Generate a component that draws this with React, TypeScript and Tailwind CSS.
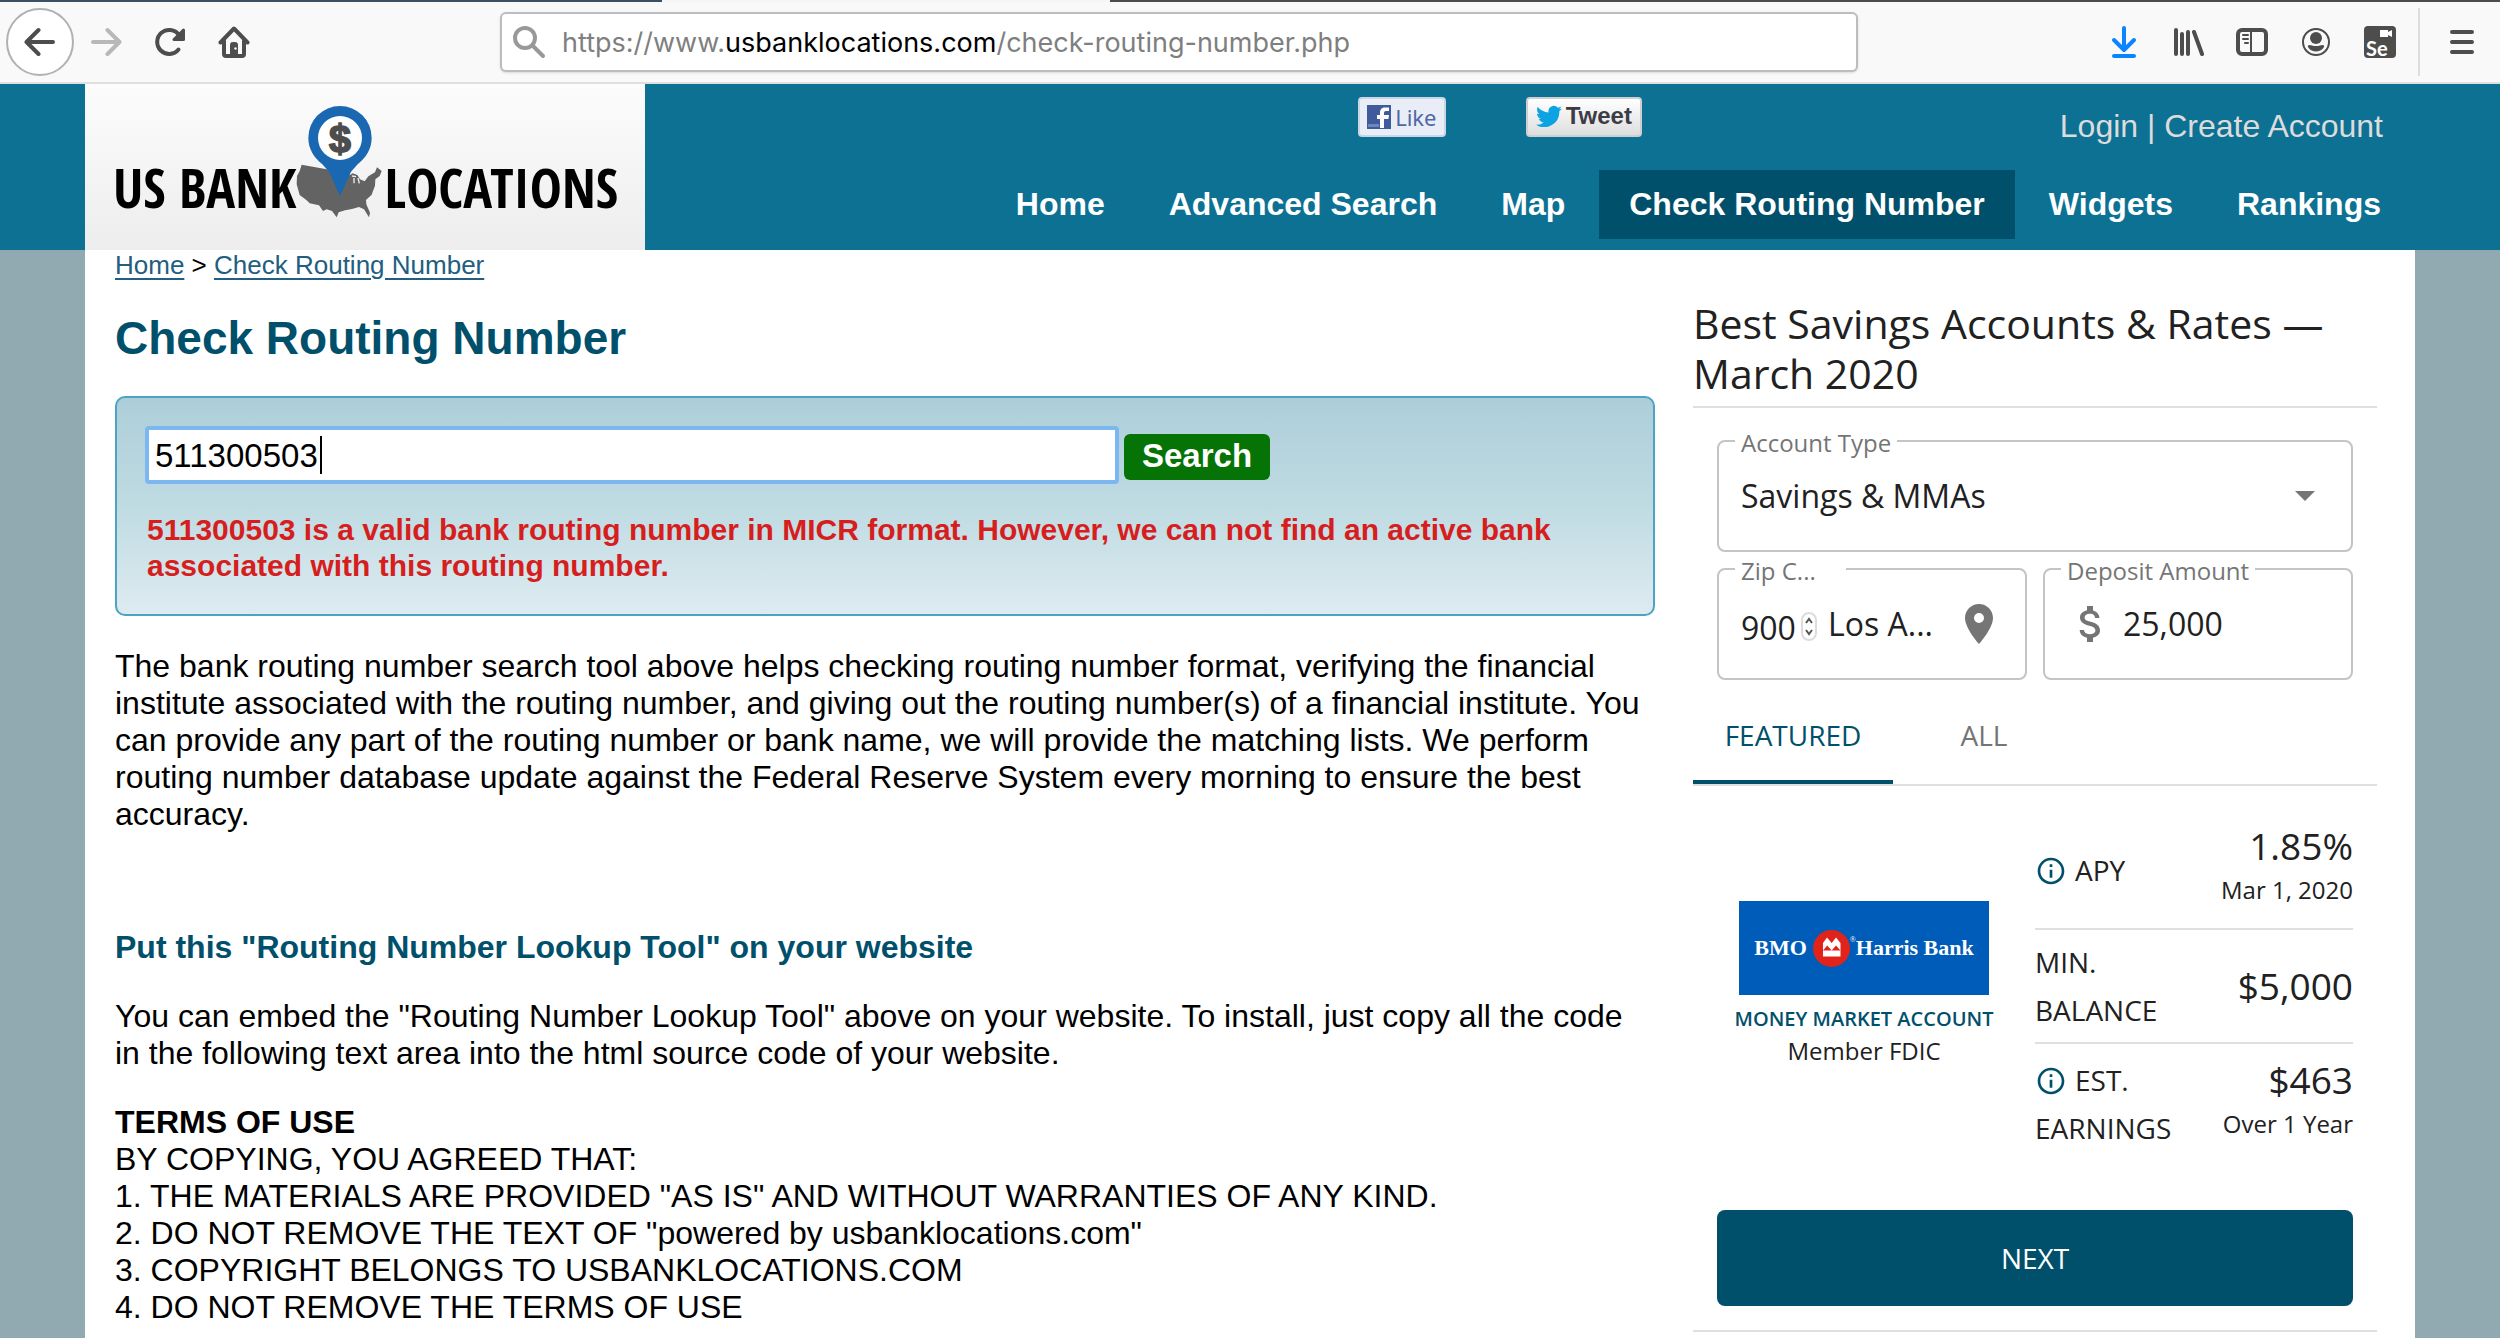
import React from "react";
import { MdAttachMoney, MdInfoOutline, MdLocationOn } from "react-icons/md";

function ToolbarButton({ label, className = "", children }: { label: string; className?: string; children: React.ReactNode }) {
  return (
    <button type="button" aria-label={label} className={`flex shrink-0 items-center justify-center ${className}`}>
      {children}
    </button>
  );
}

function BrowserBar() {
  return (
    <div className="bg-[#f9f9fa]">
      <div className="flex h-0.5">
        <div className="w-[662px] bg-[#3d5062]" />
        <div className="w-[448px] bg-[#f5f6f7]" />
        <div className="flex-1 bg-[#4c4c4c]" />
      </div>
      <div className="flex h-[82px] items-center border-b-2 border-[#dfdfdf]">
        <ToolbarButton label="Back" className="ml-1.5 size-[68px] rounded-full border-2 border-[#b1b1b1] bg-white">
          <svg width="32" height="32" viewBox="0 0 32 32" fill="none" stroke="#4d4d4e" strokeWidth="4" strokeLinecap="round" strokeLinejoin="round">
            <path d="M29 16H3M14.500 4L2.500 16l12 12" />
          </svg>
        </ToolbarButton>
        <ToolbarButton label="Forward" className="ml-4 size-8">
          <svg width="32" height="32" viewBox="0 0 32 32" fill="none" stroke="#b8b8b9" strokeWidth="4" strokeLinecap="round" strokeLinejoin="round">
            <path d="M3 16h26M17.500 4l12 12-12 12" />
          </svg>
        </ToolbarButton>
        <ToolbarButton label="Reload" className="ml-8 size-8">
          <svg width="32" height="32" viewBox="0 0 32 32" fill="none" stroke="#4d4d4e" strokeWidth="4" strokeLinecap="round" strokeLinejoin="round">
            <path d="M24.500 23.500A12 12 0 1 1 25 9" />
            <path d="M29.500 4v9.500H20z" fill="#4d4d4e" strokeWidth="3" />
          </svg>
        </ToolbarButton>
        <ToolbarButton label="Home" className="ml-8 size-8">
          <svg width="32" height="32" viewBox="0 0 32 32" fill="none" stroke="#4d4d4e" strokeWidth="4" strokeLinecap="round" strokeLinejoin="round">
            <path d="M2.500 16.500L16 2.500l13.500 14" />
            <path d="M6 15v13a2 2 0 0 0 2 2h16a2 2 0 0 0 2-2V15" />
            <path d="M12.500 29V18.500a2 2 0 0 1 2-2h3a2 2 0 0 1 2 2V29z" fill="#4d4d4e" strokeWidth="1" />
            <circle cx="17.500" cy="22.500" r="1.200" fill="#f9f9fa" stroke="none" />
          </svg>
        </ToolbarButton>
        <label className="mr-[250px] ml-[250px] flex h-[60px] flex-1 items-center rounded-md border-2 border-[#bdbdbe] bg-white px-2.5 shadow-sm">
          <svg className="mr-4 shrink-0" width="34" height="34" viewBox="0 0 34 34" fill="none" stroke="#999" strokeWidth="4" strokeLinecap="round">
            <circle cx="13" cy="13" r="10" />
            <path d="M20.500 20.500L31 31" />
          </svg>
          <span className="relative flex-1 pt-0.5 font-[Inter,sans-serif] text-[27px] leading-9 text-[#7f7f80]">
            https://www.<span className="text-black">usbanklocations.com</span>/check-routing-number.php
            <input aria-label="Address" readOnly className="absolute inset-0 w-full bg-transparent" />
          </span>
        </label>
        <ToolbarButton label="Downloads" className="size-8">
          <svg width="32" height="32" viewBox="0 0 32 32" fill="none" stroke="#0a84ff" strokeWidth="4" strokeLinecap="round" strokeLinejoin="round">
            <path d="M16 2v22M6 14l10 10 10-10M6 30h20" />
          </svg>
        </ToolbarButton>
        <ToolbarButton label="Library" className="ml-8 size-8">
          <svg width="32" height="32" viewBox="0 0 32 32" fill="none" stroke="#4d4d4e" strokeWidth="4" strokeLinecap="round">
            <path d="M4 4v24M10 8v20M16 6v22M22 6l8 22" />
          </svg>
        </ToolbarButton>
        <ToolbarButton label="Sidebars" className="ml-8 size-8">
          <svg width="32" height="32" viewBox="0 0 32 32" fill="none" stroke="#4d4d4e" strokeLinecap="round">
            <rect x="2" y="4" width="28" height="24" rx="4" strokeWidth="4" />
            <path d="M15 5v22" strokeWidth="2" />
            <path d="M7 9h5M7 13h5M9 17h3" strokeWidth="2" />
          </svg>
        </ToolbarButton>
        <ToolbarButton label="Account" className="ml-8 size-8">
          <svg width="32" height="32" viewBox="0 0 32 32" fill="#4d4d4e">
            <circle cx="16" cy="16" r="13" fill="none" stroke="#4d4d4e" strokeWidth="2" />
            <circle cx="16" cy="12" r="6" />
            <path d="M8 19.500c2-1.500 3.500.5 8 .5s6-2 8-.5c1 1.500-2.500 6-8 6s-9-4.500-8-6z" />
          </svg>
        </ToolbarButton>
        <ToolbarButton label="Selenium IDE" className="ml-8 size-8 rounded-sm bg-[#4d4d4e]">
          <span className="relative flex size-8 items-end pl-0.5 font-[Lato,sans-serif] text-xl leading-5 font-bold text-white">
            Se
            <svg className="absolute top-1 right-1" width="12" height="7" viewBox="0 0 12 7" fill="#fff">
              <path d="M0 0h8v2l4-2v7L8 5v2H0z" />
            </svg>
          </span>
        </ToolbarButton>
        <div className="ml-[22px] h-[68px] w-0.5 bg-[#dddddf]" />
        <ToolbarButton label="Menu" className="mr-[22px] ml-[26px] size-8">
          <svg width="32" height="32" viewBox="0 0 32 32" fill="none" stroke="#4d4d4e" strokeWidth="4" strokeLinecap="round">
            <path d="M6 6h20M6 16h20M6 26h20" />
          </svg>
        </ToolbarButton>
      </div>
    </div>
  );
}

function Logo() {
  return (
    <a
      href="#home"
      className="flex h-[166px] w-[560px] shrink-0 items-end bg-linear-to-b from-[#fcfcfc] to-[#ededed] px-7 pb-8 font-['Liberation_Sans_Narrow','Open_Sans_Condensed','Roboto_Condensed',sans-serif] text-[54px] leading-[54px] font-bold whitespace-nowrap text-black"
    >
      <span className="pb-1">US BANK</span>
      <svg className="shrink-0" width="88" height="112" viewBox="48 30 264 336">
        <path
          fill="#636363"
          d="M65 206l75 14 70 17 8-5 14 5 8 13 14 6 11-15 20-12 6-15 14 11-6 15-13 10-1 19-6 16-4 11-17 16 1 13 11 25-3 14-15-24-15-7-21 6-21 4-19 6-6 15-14-19-16-5-11 5-12-17-28-6-10-10-20-15-9-32 1-25 8-15z"
        />
        <path fill="none" stroke="#efefef" strokeWidth="4" d="M216 240l12 2M222 246v16M234 246l4 16" />
        <path fill="#1a68b2" d="M180 30a95 95 0 0 1 95 95c0 35-18 60-42 80l-20 22-33 74-33-74-20-22c-24-20-42-45-42-80a95 95 0 0 1 95-95z" />
        <circle cx="180" cy="126" r="66" fill="#fff" />
        <text x="180" y="167" textAnchor="middle" fontFamily="Liberation Sans, sans-serif" fontSize="118" fontWeight="700" fill="#4d4d4d" stroke="#4d4d4d" strokeWidth="5">
          $
        </text>
      </svg>
      <span className="pb-1">LOCATIONS</span>
    </a>
  );
}

const NAV = ["Home", "Advanced Search", "Map", "Check Routing Number", "Widgets", "Rankings"];

function SiteHeader() {
  return (
    <header className="flex bg-[#0d7193] px-[85px]">
      <Logo />
      <div className="flex flex-1 flex-col items-end justify-between pt-[13px] pb-[11px]">
        <div className="flex items-start pr-8">
          <button type="button" className="mr-20 flex h-10 w-22 items-center justify-center gap-1 rounded-sm border-2 border-[#ccd5e5] bg-[#e9edf6] font-['Noto_Sans',sans-serif] text-[22px] text-[#4f68a5]">
            <svg width="24" height="24" viewBox="0 0 24 24">
              <path fill="#3f5b9c" d="M0 0h24v24H0z" />
              <path fill="#6f86bb" d="M1 19h11v3H1z" />
              <path fill="#fff" d="M13 23v-9h-3v-4h3V8c0-4 2-5.500 5-5.500h4V6h-3c-1.500 0-2 .7-2 2v2h5l-.6 4H17v9z" />
            </svg>
            Like
          </button>
          <button type="button" className="mr-[418px] flex h-10 w-29 items-center justify-center gap-1 rounded-sm border-2 border-[#cfcfcf] bg-linear-to-b from-white to-[#dedede] pb-0.5 font-['Liberation_Sans',sans-serif] text-2xl leading-7 font-bold text-[#3c3c46]">
            <svg width="26" height="22" viewBox="0 0 26 22" fill="#0da3e2">
              <path d="M26 3.500c-1 .5-2 .8-3 .9 1-.7 1.800-1.700 2.200-2.900-1 .6-2.200 1-3.400 1.300A5.300 5.300 0 0 0 12.600 7.500C8.300 7.300 4.400 5.200 1.800 2c-1.400 2.500-.7 5.600 1.600 7.100-.9 0-1.700-.3-2.400-.7 0 2.600 1.700 4.700 4.200 5.300-.8.200-1.600.2-2.400.1.700 2.100 2.700 3.600 5 3.700A10.700 10.700 0 0 1 0 19.700 15.100 15.100 0 0 0 23.300 6.200c1-.7 2-1.600 2.700-2.700z" />
            </svg>
            Tweet
          </button>
          <p className="pt-[11px] text-[32px] leading-[37px] whitespace-nowrap text-[#dcdcdc]">
            <a href="#login">Login</a> | <a href="#create-account">Create Account</a>
          </p>
        </div>
        <nav className="flex gap-1 pr-1 text-[32px] leading-[37px] font-bold whitespace-nowrap text-white">
          {NAV.map((item) => (
            <a
              key={item}
              href={`#${item}`}
              aria-current={item === "Check Routing Number" ? "page" : undefined}
              className={item === "Check Routing Number" ? "bg-[#01506b] px-[30px] py-4" : "px-[30px] py-4"}
            >
              {item}
            </a>
          ))}
        </nav>
      </div>
    </header>
  );
}

function SearchPanel() {
  return (
    <form
      onSubmit={(e) => e.preventDefault()}
      className="mt-8 rounded-[10px] border-2 border-[#4ca4c4] bg-linear-to-b from-[#adced9] via-[#bfdbe2] to-[#deebf1] px-[30px] pt-7 pb-[30px]"
    >
      <div className="-ml-0.5 flex items-end gap-[5px]">
        <div className="relative">
          <input
            aria-label="Routing number or bank name"
            defaultValue="511300503"
            className="h-[58px] w-[974px] rounded-sm border-4 border-[#7db7f2] bg-white px-1.5 pt-0.5 text-[33px] text-black outline-none"
          />
          <span className="absolute top-2.5 left-[175px] h-[38px] w-0.5 bg-black" />
        </div>
        <button type="submit" className="mb-1 h-[46px] rounded-md bg-[#067307] px-[18px] pb-0.5 text-[33px] leading-[38px] font-bold text-white">
          Search
        </button>
      </div>
      <p className="mt-7 text-[30px] leading-9 font-bold text-[#d61e1e]">
        511300503 is a valid bank routing number in MICR format. However, we can not find an active bank associated with this routing number.
      </p>
    </form>
  );
}

function MainColumn() {
  return (
    <main className="min-w-0 flex-1 text-[32px] leading-[37px] text-black">
      <nav aria-label="Breadcrumb" className="text-[26px] leading-[30px]">
        <a href="#home" className="text-[#215e80] underline underline-offset-4">Home</a> &gt;{" "}
        <a href="#check" className="text-[#215e80] underline underline-offset-4">Check Routing Number</a>
      </nav>
      <h1 className="mt-8 text-[46px] leading-[52px] font-bold text-[#01506b]">Check Routing Number</h1>
      <SearchPanel />
      <p className="mt-8">
        The bank routing number search tool above helps checking routing number format, verifying the financial institute associated with the
        routing number, and giving out the routing number(s) of a financial institute. You can provide any part of the routing number or bank
        name, we will provide the matching lists. We perform routing number database update against the Federal Reserve System every morning to
        ensure the best accuracy.
      </p>
      <h2 className="mt-24 font-bold text-[#01506b]">Put this "Routing Number Lookup Tool" on your website</h2>
      <p className="mt-8">
        You can embed the "Routing Number Lookup Tool" above on your website. To install, just copy all the code in the following text area into
        the html source code of your website.
      </p>
      <h3 className="mt-8 font-bold">TERMS OF USE</h3>
      <p>BY COPYING, YOU AGREED THAT:</p>
      <p>1. THE MATERIALS ARE PROVIDED "AS IS" AND WITHOUT WARRANTIES OF ANY KIND.</p>
      <p>2. DO NOT REMOVE THE TEXT OF "powered by usbanklocations.com"</p>
      <p>3. COPYRIGHT BELONGS TO USBANKLOCATIONS.COM</p>
      <p>4. DO NOT REMOVE THE TERMS OF USE</p>
    </main>
  );
}

function Field({ label, htmlFor, labelClass = "", className = "", children }: { label: string; htmlFor: string; labelClass?: string; className?: string; children: React.ReactNode }) {
  return (
    <div className={`relative flex h-28 items-center rounded-lg border-2 border-[#c4c4c4] ${className}`}>
      <label htmlFor={htmlFor} className={`absolute -top-[15px] left-4 bg-white px-1.5 text-2xl leading-8 whitespace-nowrap text-[#757575] ${labelClass}`}>
        {label}
      </label>
      {children}
    </div>
  );
}

function RateFilters() {
  return (
    <div className="mt-8 flex flex-col gap-4 px-6 text-[32px] leading-[44px] text-[#212121]">
      <Field label="Account Type" htmlFor="account-type">
        <select id="account-type" className="h-full w-full appearance-none bg-transparent pl-[22px] outline-none">
          <option>Savings &amp; MMAs</option>
        </select>
        <svg className="pointer-events-none absolute right-9" width="20" height="10" viewBox="0 0 20 10">
          <path d="M0 0h20L10 10z" fill="#757575" />
        </svg>
      </Field>
      <div className="grid grid-cols-2 gap-4">
        <Field label="Zip C..." htmlFor="zip" labelClass="w-[111px]" className="pl-[22px]">
          <input id="zip" defaultValue="900" className="mt-2 w-[58px] bg-transparent outline-none" />
          <svg className="mt-1.5 ml-0.5 shrink-0" width="16" height="30" viewBox="0 0 16 30" fill="none">
            <rect x="1" y="1" width="14" height="27" rx="7" stroke="#dcdcdc" strokeWidth="2" fill="#fff" />
            <path d="M5 11l3-4 3 4M5 18l3 4 3-4" stroke="#555" strokeWidth="2" />
          </svg>
          <span className="ml-[11px] whitespace-nowrap">Los A...</span>
          <MdLocationOn className="ml-auto mr-[22px] size-12 shrink-0 text-[#757575]" />
        </Field>
        <Field label="Deposit Amount" htmlFor="deposit" className="pl-[22px]">
          <MdAttachMoney className="size-12 shrink-0 text-[#757575]" />
          <input id="deposit" defaultValue="25,000" className="ml-2 w-full min-w-0 bg-transparent outline-none" />
        </Field>
      </div>
    </div>
  );
}

function InfoIcon() {
  return <MdInfoOutline className="mr-2 inline-block size-8 align-[-6px] text-[#01506b]" />;
}

function Offer() {
  return (
    <div className="flex items-center gap-6 px-6 pt-9">
      <div className="flex flex-1 flex-col items-center pb-1">
        <div className="flex h-[94px] w-[250px] items-center justify-center gap-1.5 bg-[#005cb9] font-['Liberation_Serif',serif] text-[22px] leading-6 font-bold whitespace-nowrap text-white">
          BMO
          <span className="relative">
            <svg width="37" height="37" viewBox="0 0 37 37">
              <circle cx="18.500" cy="18.500" r="18.500" fill="#e2231a" />
              <path fill="#fff" d="M10 26.500V13l4-5.500 4.700 5.500L23 7.500l4.500 5.500v13.500z" />
              <path fill="#e2231a" d="M10 20.500l4.200-5 4.500 5 4.300-5 4.500 5z" />
            </svg>
            <span className="absolute top-1 -right-1.5 text-[8px] leading-3 font-normal">®</span>
          </span>
          Harris Bank
        </div>
        <a href="#offer" className="mt-2.5 text-[20px] leading-7 font-semibold whitespace-nowrap text-[#01506b]">MONEY MARKET ACCOUNT</a>
        <p className="text-2xl leading-9">Member FDIC</p>
      </div>
      <dl className="w-[318px] text-[28px] leading-[48px]">
        <div className="flex items-center justify-between border-b-2 border-[#e0e0e0] pb-2.5">
          <dt><InfoIcon />APY</dt>
          <dd className="pb-2 text-right">
            <span className="block text-[37px] leading-[48px] font-medium">1.85%</span>
            <span className="block text-2xl leading-10">Mar 1, 2020</span>
          </dd>
        </div>
        <div className="flex items-center justify-between border-b-2 border-[#e0e0e0] py-2">
          <dt>MIN.<br />BALANCE</dt>
          <dd className="text-[37px] leading-[48px] font-medium">$5,000</dd>
        </div>
        <div className="flex items-center justify-between pt-3">
          <dt><InfoIcon />EST.<br />EARNINGS</dt>
          <dd className="pb-2 text-right">
            <span className="block text-[37px] leading-[48px] font-medium">$463</span>
            <span className="block text-2xl leading-10">Over 1 Year</span>
          </dd>
        </div>
      </dl>
    </div>
  );
}

function RatesSidebar() {
  return (
    <aside className="w-[684px] shrink-0 border-b-2 border-[#e0e0e0] pt-12 pb-6 font-['Open_Sans',sans-serif] text-[#212121]">
      <h2 className="border-b-2 border-[#e0e0e0] pb-2 text-[41px] leading-[50px]">Best Savings Accounts &amp; Rates — March 2020</h2>
      <RateFilters />
      <div role="tablist" className="mt-2 flex border-b-2 border-[#e0e0e0] text-[28px] leading-10">
        <button type="button" role="tab" aria-selected="true" className="h-24 w-50 border-b-4 border-[#01506b] pt-0.5 text-[#01506b]">FEATURED</button>
        <button type="button" role="tab" aria-selected="false" className="h-24 w-[182px] border-b-4 border-transparent pt-0.5 text-[#757575]">ALL</button>
      </div>
      <Offer />
      <div className="mt-[58px] px-6">
        <button type="button" className="h-24 w-full rounded-lg bg-[#01506b] text-[28px] text-white">NEXT</button>
      </div>
    </aside>
  );
}

export default function App() {
  return (
    <div className="flex min-h-screen flex-col bg-[#91a9b0] font-['Liberation_Sans',Arial,sans-serif]">
      <BrowserBar />
      <SiteHeader />
      <div className="mx-[85px] flex flex-1 items-start gap-[38px] bg-white pr-[38px] pl-[30px]">
        <MainColumn />
        <RatesSidebar />
      </div>
    </div>
  );
}
